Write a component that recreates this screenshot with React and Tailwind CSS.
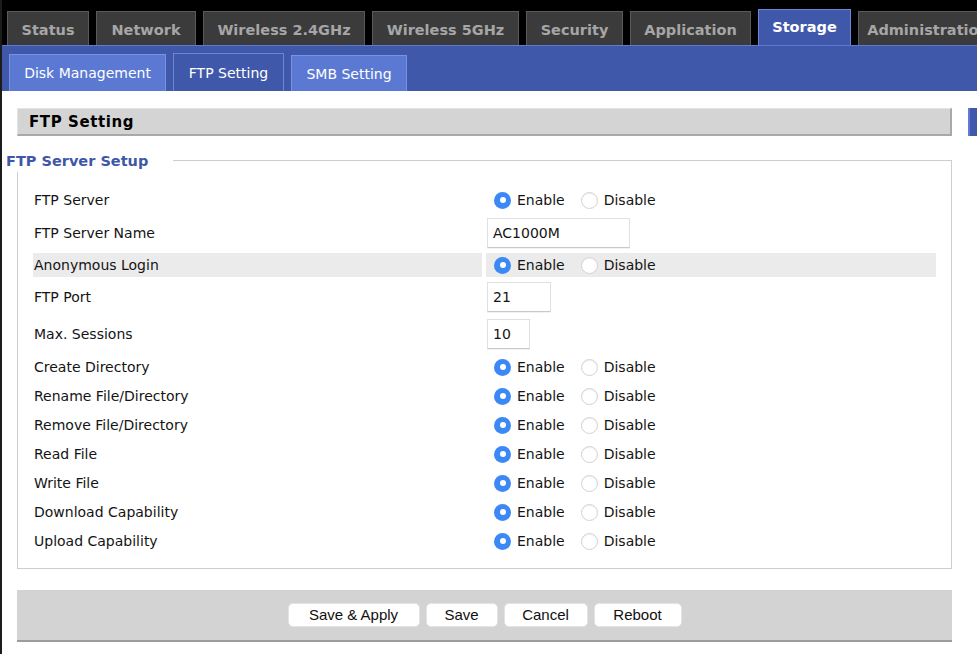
import React from 'react';

const topTabs = [
  { label: 'Status', w: 'w-[82px]' },
  { label: 'Network', w: 'w-[100px]' },
  { label: 'Wireless 2.4GHz', w: 'w-[162px]' },
  { label: 'Wireless 5GHz', w: 'w-[147px]' },
  { label: 'Security', w: 'w-[97px]' },
  { label: 'Application', w: 'w-[121px]' },
  { label: 'Storage', w: 'w-[93px]', active: true },
  { label: 'Administration', w: 'w-[140px]' },
];

const subTabs = [
  { label: 'Disk Management', cls: 'w-[157px] h-[37px] bg-[#5b79d3] border-[#7893e2]' },
  { label: 'FTP Setting', cls: 'w-[111px] h-[38px] bg-[#4058a9] border-[#6c86d6]' },
  { label: 'SMB Setting', cls: 'w-[116px] h-[36px] bg-[#5b79d3] border-[#7893e2]' },
];

// each row: label + kind of value
const rows = [
  { label: 'FTP Server', type: 'radio', h: 'h-[26px]' },
  { label: 'FTP Server Name', type: 'input', value: 'AC1000M', w: 'w-[143px]', h: 'h-[34px]' },
  { label: 'Anonymous Login', type: 'radio', h: 'h-[24px]', shaded: true },
  { label: 'FTP Port', type: 'input', value: '21', w: 'w-[64px]', h: 'h-[34px]' },
  { label: 'Max. Sessions', type: 'input', value: '10', w: 'w-[43px]', h: 'h-[34px]' },
  { label: 'Create Directory', type: 'radio', h: 'h-[26px]' },
  { label: 'Rename File/Directory', type: 'radio', h: 'h-[26px]' },
  { label: 'Remove File/Directory', type: 'radio', h: 'h-[26px]' },
  { label: 'Read File', type: 'radio', h: 'h-[26px]' },
  { label: 'Write File', type: 'radio', h: 'h-[26px]' },
  { label: 'Download Capability', type: 'radio', h: 'h-[26px]' },
  { label: 'Upload Capability', type: 'radio', h: 'h-[26px]' },
];

const Radio = ({ checked }) =>
  checked ? (
    <span className="w-[17px] h-[17px] rounded-full bg-[#3c88f6] flex items-center justify-center">
      <span className="w-[6px] h-[6px] rounded-full bg-white" />
    </span>
  ) : (
    <span className="w-[17px] h-[17px] rounded-full bg-white border border-[#d2d2d2] shadow-[inset_0_1px_1px_rgba(0,0,0,0.06)]" />
  );

const EnableDisable = () => (
  <div className="flex items-center pl-[8px]">
    <Radio checked />
    <span className="ml-[6px] pt-[1px]">Enable</span>
    <span className="ml-[16px] flex"><Radio /></span>
    <span className="ml-[6px] pt-[1px]">Disable</span>
  </div>
);

const App = () => {
  return (
    <div className="w-[977px] h-[654px] overflow-hidden bg-white border-l-2 border-[#1c1c1c] font-['DejaVu_Sans',sans-serif] text-[14px] text-[#141414]">
      {/* main nav */}
      <div className="h-[45px] bg-black flex items-end pl-[5px] gap-[7px] whitespace-nowrap">
        {topTabs.map((t) =>
          t.active ? (
            <div key={t.label} className={`${t.w} h-[36px] shrink-0 bg-[#4058a9] border border-b-0 border-[#6c86d6] flex items-center justify-center pt-[1px] font-bold text-[14.5px] text-white`}>
              {t.label}
            </div>
          ) : (
            <div key={t.label} className={`${t.w} h-[34px] shrink-0 bg-[#3b3b3b] border border-b-0 border-[#5a5a5a] flex items-center justify-center pt-[4px] font-bold text-[14.5px] text-[#a6a6a6]`}>
              {t.label}
            </div>
          )
        )}
      </div>

      {/* sub nav */}
      <div className="h-[46px] bg-[#4058a9] border-t border-[#5f7ad0] flex items-end pl-[7px] gap-[7px]">
        {subTabs.map((t) => (
          <div key={t.label} className={`${t.cls} border border-b-0 flex items-center justify-center pt-[1px] text-white`}>
            {t.label}
          </div>
        ))}
      </div>

      {/* content */}
      <div className="flex pt-[17px]">
        <div className="ml-[15px] w-[935px] shrink-0">
          <div className="h-[28px] bg-[#d4d4d4] border-t border-l border-t-[#e4e4e4] border-l-[#e4e4e4] border-r-2 border-b-2 border-r-[#a9a9a9] border-b-[#a9a9a9] pl-[11px] pt-[2px] flex items-center font-bold text-[15px] tracking-[0.6px] text-black">
            FTP Setting
          </div>

          <div className="relative mt-[24px] h-[409px] border border-[#cdcdcd]">
            <div className="absolute top-[-11px] left-[-12px] h-[22px] pr-[25px] bg-white flex items-center pt-[2px] font-bold text-[14.5px] text-[#3f57a8]">
              FTP Server Setup
            </div>

            <div className="pt-[26px] px-[15px] flex flex-col gap-[3px]">
              {rows.map((r) => (
                <div key={r.label} className={`grid grid-cols-[449px_450px] gap-x-[4px] ${r.h}`}>
                  <div className={`flex items-center pl-[1px] ${r.shaded ? 'bg-[#ebebeb]' : ''}`}>{r.label}</div>
                  <div className={`flex items-center ${r.shaded ? 'bg-[#ebebeb]' : ''}`}>
                    {r.type === 'radio' ? (
                      <EnableDisable />
                    ) : (
                      <div className={`${r.w} h-[30px] ml-[1px] bg-white border border-[#e0e0e0] border-b-[#c9c9c9] shadow-[0_1px_0_rgba(0,0,0,0.05)] flex items-center pl-[5px]`}>
                        {r.value}
                      </div>
                    )}
                  </div>
                </div>
              ))}
            </div>
          </div>

          <div className="mt-[21px] h-[52px] bg-[#d3d3d3] border-b-2 border-[#9c9c9c] flex items-center justify-center gap-[6px] font-['Liberation_Sans',Arial,sans-serif] text-[15px] text-[#111]">
            <button className="w-[132px] h-[24px] rounded-[5px] bg-white border border-[#e4e4e4]">Save &amp; Apply</button>
            <button className="w-[72px] h-[24px] rounded-[5px] bg-white border border-[#e4e4e4]">Save</button>
            <button className="w-[84px] h-[24px] rounded-[5px] bg-white border border-[#e4e4e4]">Cancel</button>
            <button className="w-[88px] h-[24px] rounded-[5px] bg-white border border-[#e4e4e4]">Reboot</button>
          </div>
        </div>

        <div className="ml-[16px] w-[20px] h-[28px] shrink-0 bg-[#4058a9] border-l-2 border-[#5f7ad8]" />
      </div>
    </div>
  );
};

export default App;
